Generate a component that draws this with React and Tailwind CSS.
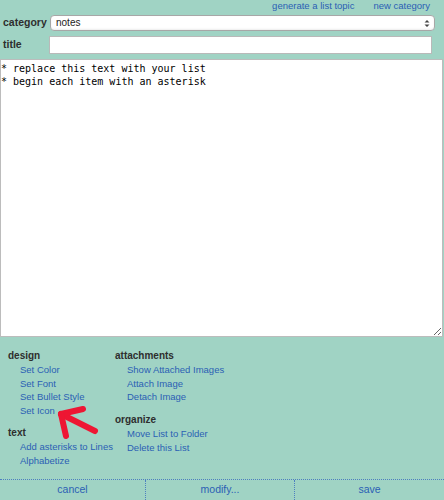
const linkCls = 'text-[#2b5fb4] leading-[13.7px] block'

function SectionHead({ children, className = '' }) {
  return <div className={`font-bold text-[#2e2e2e] text-[10px] leading-[14px] ${className}`}>{children}</div>
}

function ActionLink({ children }) {
  return (
    <a href="#" className={`${linkCls} pl-[12px] whitespace-nowrap`}>
      {children}
    </a>
  )
}

export default function App() {
  return (
    <div
      className="w-[444px] h-[500px] bg-[#a0d3c4] flex flex-col text-[9.5px] overflow-hidden"
      style={{ fontFamily: '"Liberation Sans", Arial, sans-serif' }}
    >
      {/* top links */}
      <div className="h-[15px] shrink-0 flex justify-end gap-[19px] pr-[14px] leading-[11px]">
        <a href="#" className="text-[#2b5fb4]">generate a list topic</a>
        <a href="#" className="text-[#2b5fb4]">new category</a>
      </div>

      {/* category */}
      <div className="flex items-center h-[16px] shrink-0">
        <label className="w-[50px] pl-[3px] font-bold text-[10.5px] text-[#2e2e2e]">category</label>
        <div className="w-[385px] h-[16px] bg-white rounded-[4px] border border-[#a7a7a7] flex items-center justify-between pl-[5px] pr-[4px] shadow-[inset_0_-1px_2px_rgba(0,0,0,0.08)]">
          <span className="text-[#222] text-[10px] leading-none">notes</span>
          <svg width="6" height="9" viewBox="0 0 6 9">
            <path d="M0.5 3.5 L3 1 L5.5 3.5 Z M0.5 5.5 L3 8 L5.5 5.5 Z" fill="#444" />
          </svg>
        </div>
      </div>

      {/* title */}
      <div className="flex items-center h-[18px] mt-[5px] shrink-0">
        <label className="w-[49px] pl-[3px] font-bold text-[10.5px] text-[#2e2e2e]">title</label>
        <input
          className="w-[383px] h-[18px] bg-white border border-[#b9b9b9] outline-none px-1"
          defaultValue=""
        />
      </div>

      {/* list body */}
      <textarea
        className="mt-[5px] shrink-0 w-[443px] h-[278px] bg-white border border-[#bcbcbc] outline-none pl-0 pt-[2px] text-[10px] leading-[13px] text-black resize"
        style={{ fontFamily: '"DejaVu Sans Mono", "Liberation Mono", monospace' }}
        defaultValue={'* replace this text with your list\n* begin each item with an asterisk'}
      />

      {/* actions */}
      <div className="relative flex-1 flex pl-[8px] pt-[12px]">
        <div className="w-[107px]">
          <SectionHead>design</SectionHead>
          <ActionLink>Set Color</ActionLink>
          <ActionLink>Set Font</ActionLink>
          <ActionLink>Set Bullet Style</ActionLink>
          <ActionLink>Set Icon</ActionLink>
          <SectionHead className="mt-[8px]">text</SectionHead>
          <ActionLink>Add asterisks to Lines</ActionLink>
          <ActionLink>Alphabetize</ActionLink>
        </div>
        <div>
          <SectionHead>attachments</SectionHead>
          <ActionLink>Show Attached Images</ActionLink>
          <ActionLink>Attach Image</ActionLink>
          <ActionLink>Detach Image</ActionLink>
          <SectionHead className="mt-[9px]">organize</SectionHead>
          <ActionLink>Move List to Folder</ActionLink>
          <ActionLink>Delete this List</ActionLink>
        </div>

        {/* red pointer arrow */}
        <svg
          className="absolute left-0 top-0 pointer-events-none"
          width="120"
          height="110"
          viewBox="0 0 120 110"
        >
          <g transform="translate(0,-338)" stroke="#ee1633" strokeWidth="6" strokeLinecap="round" strokeLinejoin="round" fill="none">
            <path d="M95 432 L61 415" />
            <path d="M61 415 L83 410" />
            <path d="M61 415 L66 437" />
          </g>
        </svg>
      </div>

      {/* footer buttons */}
      <div className="h-[21px] shrink-0 flex border-t border-dotted border-[#4d7fc0]">
        <button className="w-[146px] text-[#2b5fb4] text-[10.5px] border-r border-dotted border-[#4d7fc0]">cancel</button>
        <button className="w-[149px] text-[#2b5fb4] text-[10.5px] border-r border-dotted border-[#4d7fc0]">modify...</button>
        <button className="flex-1 text-[#2b5fb4] text-[10.5px]">save</button>
      </div>
    </div>
  )
}
